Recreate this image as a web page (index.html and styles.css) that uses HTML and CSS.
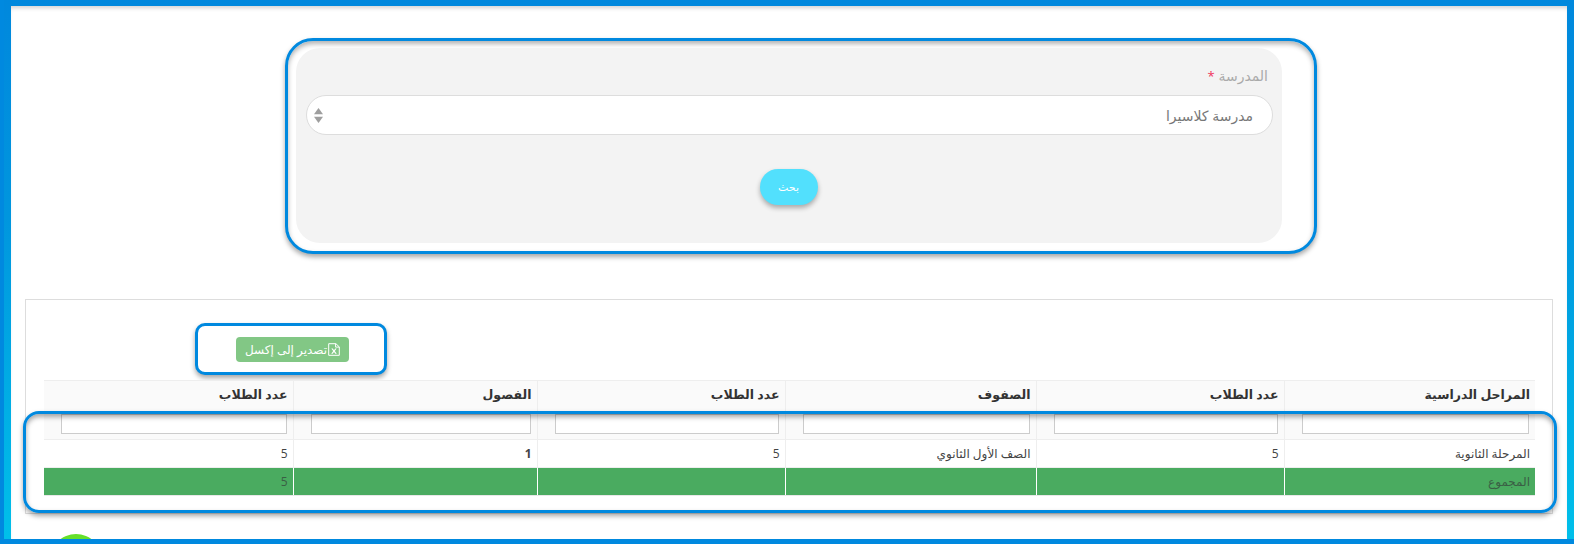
FILE: index.html
```html
<!DOCTYPE html>
<html lang="ar" dir="rtl">
<head>
<meta charset="utf-8">
<title>تقرير المدرسة</title>
<link rel="stylesheet" href="styles.css">
</head>
<body>
<div class="frame">
  <main class="sheet">
    <section class="form-outline">
      <form class="form-panel">
        <label class="field-label">المدرسة <span class="req">*</span></label>
        <div class="select-box">
          <span class="select-value">مدرسة كلاسيرا</span>
          <svg class="select-arrows" viewBox="0 0 9 15" width="9" height="15" aria-hidden="true">
            <path d="M4.5 0 9 6.2H0z"/>
            <path d="M0 8.8h9L4.5 15z"/>
          </svg>
        </div>
        <div class="btn-row"><button type="button" class="search-btn">بحث</button></div>
      </form>
    </section>

    <section class="card">
      <div class="export-row">
        <div class="export-outline">
          <button type="button" class="export-btn">
            <svg class="xls-icon" viewBox="0 0 12 13" width="12" height="13" aria-hidden="true">
              <path class="xls-page" d="M.7.7h7.2l3.4 3.2v8.4H.7z"/>
              <path class="xls-fold" d="M7.6.7v3.4h3.7"/>
              <path class="xls-x" d="M3.3 5.6h1.5l1.2 1.7 1.2-1.7h1.5L6.8 8l2 2.8H7.3L6 8.9l-1.3 1.9H3.2l2-2.8z"/>
            </svg>
            <span>تصدير إلى إكسل</span>
          </button>
        </div>
      </div>
      <div class="table-wrap">
        <table class="report">
          <thead>
            <tr class="head-row">
              <th class="c1">المراحل الدراسية</th>
              <th class="c2">عدد الطلاب</th>
              <th class="c3">الصفوف</th>
              <th class="c4">عدد الطلاب</th>
              <th class="c5">الفصول</th>
              <th class="c6">عدد الطلاب</th>
            </tr>
            <tr class="filter-row">
              <th><input class="filter" type="text"></th>
              <th><input class="filter" type="text"></th>
              <th><input class="filter" type="text"></th>
              <th><input class="filter" type="text"></th>
              <th><input class="filter" type="text"></th>
              <th><input class="filter" type="text"></th>
            </tr>
          </thead>
          <tbody>
            <tr class="data-row">
              <td>المرحلة الثانوية</td>
              <td>5</td>
              <td>الصف الأول الثانوي</td>
              <td>5</td>
              <td class="strong">1</td>
              <td>5</td>
            </tr>
            <tr class="total-row">
              <td>المجموع</td>
              <td></td>
              <td></td>
              <td></td>
              <td></td>
              <td>5</td>
            </tr>
          </tbody>
        </table>
        <div class="rows-outline"></div>
      </div>
    </section>

    <div class="fab"></div>
  </main>
</div>
</body>
</html>
```

FILE: styles.css
```css
* { box-sizing: border-box; }
html, body { margin: 0; padding: 0; }
body {
  width: 1574px;
  height: 544px;
  overflow: hidden;
  font-family: "Open Sans", "DejaVu Sans", sans-serif;
  background: #fff;
}
.frame {
  height: 544px;
  padding: 6px 7px 5px 7px;
  border-left: 4px solid #0089df;
  background: linear-gradient(180deg, #0088dd 0%, #0096de 40%, #00c0ea 100%);
  background-color: #0089df;
  position: relative;
}
.frame::after {
  content: "";
  position: absolute;
  left: 0; right: 0; bottom: 0;
  height: 5px;
  background: #0089df;
}
.sheet {
  height: 533px;
  background: #fff;
  overflow: hidden;
  box-shadow: inset 0 4px 4px -2px rgba(0,0,0,.18);
  padding-top: 32px;
}
.form-outline {
  width: 1032px;
  height: 216px;
  margin-inline-start: 250px;
  padding: 7px 32px 7px 8px;
  border: 3px solid #0089df;
  border-radius: 28px;
  background: #fff;
  box-shadow: 0 3px 5px rgba(0,0,0,.35), inset 0 3px 5px rgba(0,0,0,.3);
}
.form-panel {
  height: 195px;
  background: #f3f3f3;
  border-radius: 24px;
  padding: 18px 9px 0 10px;
}
.field-label {
  display: block;
  height: 29px;
  padding-inline-start: 5px;
  font-size: 14px;
  line-height: 20px;
  color: #aaa;
}
.req { color: #f0325a; font-size: 13px; }
.select-box {
  display: flex;
  align-items: center;
  justify-content: space-between;
  height: 40px;
  padding: 0 19px 0 7px;
  background: #fff;
  border: 1px solid #ddd;
  border-radius: 20px;
}
.select-value { font-size: 14px; color: #777; }
.select-arrows { fill: #9e9e9e; }
.btn-row {
  display: flex;
  justify-content: center;
  margin-top: 34px;
  padding-inline-start: 2px;
}
.search-btn {
  width: 58px;
  height: 36px;
  padding: 0 0 2px;
  border: 0;
  border-radius: 18px;
  background: #52e0fd;
  color: #fff;
  font: inherit;
  font-size: 11px;
  box-shadow: 0 3px 5px rgba(0,0,0,.3);
}
.card {
  width: 1528px;
  height: 215px;
  margin: 45px 14px 0 14px;
  padding: 23px 17px 0 19px;
  border: 1px solid #ddd;
}
.export-row {
  display: flex;
  justify-content: flex-end;
  margin-inline-end: 150px;
  margin-bottom: 5px;
}
.export-outline {
  display: flex;
  justify-content: center;
  align-items: center;
  width: 192px;
  height: 52px;
  padding-left: 3px;
  border: 3px solid #0089df;
  border-radius: 10px;
  background: #fff;
  box-shadow: 0 3px 5px rgba(0,0,0,.35);
}
.export-btn {
  display: flex;
  align-items: center;
  justify-content: center;
  gap: 1px;
  width: 113px;
  height: 25px;
  padding: 0;
  border: 0;
  border-radius: 4px;
  background: #82c785;
  color: #fff;
  font: inherit;
  font-size: 12px;
}
.xls-icon { flex: none; }
.xls-page, .xls-fold { fill: none; stroke: #fff; stroke-width: 1; }
.xls-x { fill: #fff; }
.table-wrap { position: relative; }
.report {
  width: 1491px;
  table-layout: fixed;
  border-collapse: collapse;
  font-size: 12px;
  color: #444;
}
.report th, .report td {
  border: 1px solid #eee;
  padding: 0 5px 0 7px;
  text-align: right;
}
.report tr > :first-child { border-right: 0; }
.report tr > :last-child { border-left: 0; }
.c1 { width: 251px; }
.c2 { width: 248px; }
.c3 { width: 251px; }
.c4 { width: 248px; }
.c5 { width: 244px; }
.c6 { width: 249px; }
.head-row th {
  height: 29px;
  padding-bottom: 2px;
  background: #fafafa;
  font-size: 12.5px;
  font-weight: 700;
  color: #333;
  border-bottom: 0;
}
.filter-row th {
  height: 30px;
  background: #fafafa;
  border-top: 0;
  padding: 0 6px 0 17px;
}
.filter {
  display: block;
  width: 100%;
  height: 20px;
  padding: 0;
  border: 1px solid #ccc;
  background: #fff;
}
.data-row td { height: 28px; }
.strong { font-weight: 700; }
.total-row td {
  height: 28px;
  background: #4aab60;
  border-color: #fff;
  border-top-color: #fff;
  border-bottom-color: #e8e8e8;
  color: #3a5f45;
}
.rows-outline {
  position: absolute;
  top: 31px;
  left: -22px;
  width: 1534px;
  height: 102px;
  border: 3px solid #0089df;
  border-radius: 16px;
  box-shadow: 0 3px 5px rgba(0,0,0,.35), inset 0 3px 5px rgba(0,0,0,.35);
  pointer-events: none;
}
.fab {
  width: 52px;
  height: 52px;
  margin-top: 20px;
  margin-inline-start: auto;
  margin-inline-end: 39px;
  border-radius: 50%;
  background: #66e02a;
}
```
